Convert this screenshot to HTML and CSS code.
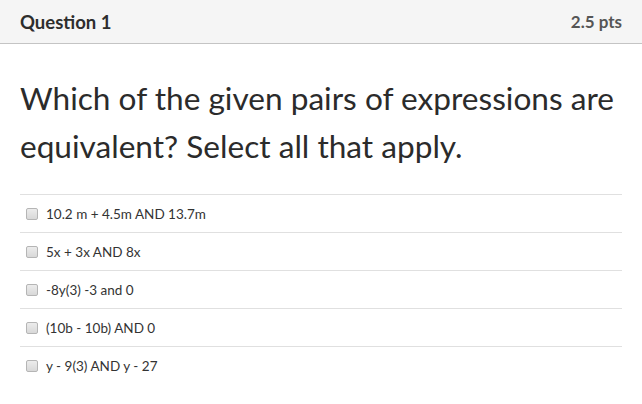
FILE: index.html
```html
<!DOCTYPE html>
<html>
<head>
<meta charset="utf-8">
<link rel="stylesheet" href="styles.css">
</head>
<body>
<div class="header">
  <span class="title">Question 1</span>
  <span class="pts">2.5 pts</span>
</div>
<div class="content">
  <p class="question">Which of the given pairs of expressions are equivalent? Select all that apply.</p>
  <div class="answers">
    <label class="answer"><span class="box"></span><span>10.2 m + 4.5m AND 13.7m</span></label>
    <label class="answer"><span class="box"></span><span>5x + 3x AND 8x</span></label>
    <label class="answer"><span class="box"></span><span>-8y(3) -3 and 0</span></label>
    <label class="answer"><span class="box"></span><span>(10b - 10b) AND 0</span></label>
    <label class="answer"><span class="box"></span><span>y - 9(3) AND y - 27</span></label>
  </div>
</div>
</body>
</html>
```
FILE: styles.css
```css
html, body {
  margin: 0;
  padding: 0;
  background: #fff;
  font-family: Lato, "Liberation Sans", sans-serif;
  color: #2d2d2d;
}
.header {
  height: 43px;
  background: #f5f5f5;
  border-bottom: 1px solid #c4c4c4;
  display: flex;
  align-items: center;
  justify-content: space-between;
  padding: 0 20px;
}
.title {
  font-weight: bold;
  font-size: 18.5px;
  color: #2d2d2d;
}
.pts {
  font-weight: bold;
  font-size: 17px;
  color: #555;
}
.content {
  padding: 0 20px;
}
.question {
  margin: 30px 0 24px 0;
  font-size: 31.6px;
  line-height: 48px;
  color: #2b2b2b;
}
.answers {
  display: flex;
  flex-direction: column;
}
.answer {
  height: 37px;
  border-top: 1px solid #e0e0e0;
  display: flex;
  align-items: center;
  font-size: 13.5px;
  color: #333;
}
.box {
  width: 10px;
  height: 10px;
  border: 1px solid #b5b5b5;
  border-radius: 2px;
  background: linear-gradient(#ececec, #d8d8d8);
  margin: 0 8px 0 6px;
}
```
